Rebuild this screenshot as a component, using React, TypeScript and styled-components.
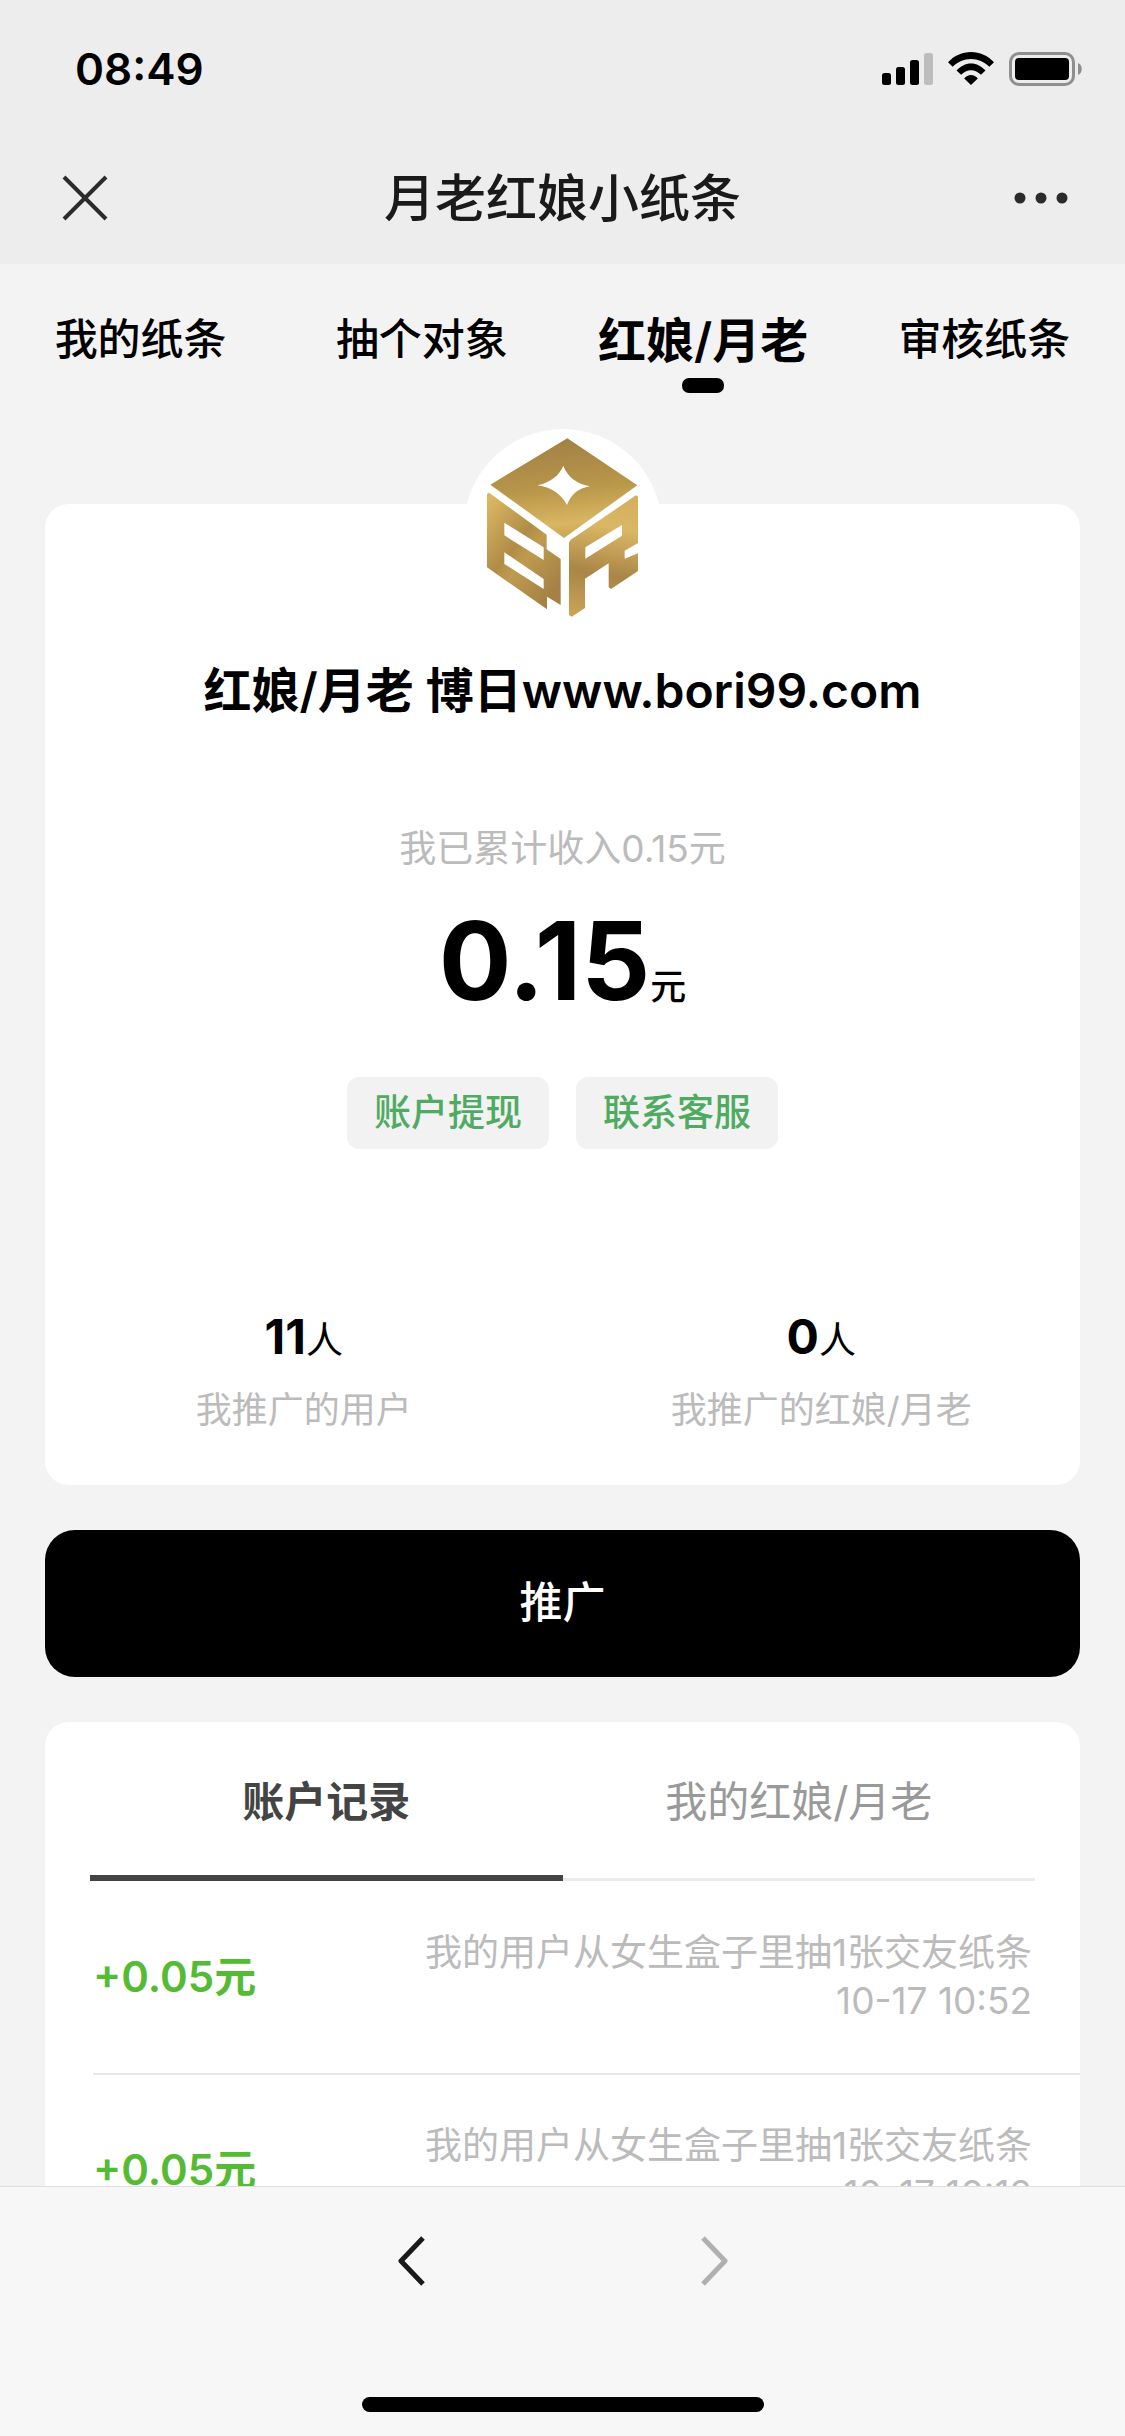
import React from "react";
import styled, { createGlobalStyle } from "styled-components";

const GlobalStyle = createGlobalStyle`
  *, *::before, *::after { box-sizing: border-box; }
  body {
    margin: 0;
    background: #f3f3f3;
    color: #000;
    font-family: Inter, "Noto Sans CJK SC", sans-serif;
  }
  button {
    margin: 0;
    padding: 0;
    border: 0;
    background: none;
    color: inherit;
    font: inherit;
    cursor: pointer;
  }
  svg { display: block; }
  h1, h2, p, ul, dl, dd { margin: 0; padding: 0; }
`;

const Screen = styled.div`
  display: flex;
  flex-direction: column;
  height: 100vh;
`;

const Header = styled.header`
  flex: none;
  background: #ededed;
`;

const StatusBar = styled.div`
  display: flex;
  align-items: center;
  justify-content: space-between;
  height: 132px;
  padding: 6px 42px 0 75px;
`;

const Clock = styled.time`
  font-size: 44px;
  font-weight: 600;
  line-height: 54px;
`;

const StatusIcons = styled.div`
  display: flex;
  align-items: center;
  gap: 15px;
`;

const TitleBar = styled.div`
  display: grid;
  grid-template-columns: 1fr auto 1fr;
  align-items: center;
  height: 132px;
  padding: 0 57px;
`;

const Title = styled.h1`
  padding-top: 2px;
  color: #1a1a1a;
  font-size: 51px;
  font-weight: 500;
  line-height: 66px;
`;

const IconButton = styled.button<{ $end?: boolean }>`
  justify-self: ${(p) => (p.$end ? "end" : "start")};
`;

const Content = styled.main`
  flex: 1;
  min-height: 0;
  overflow-y: auto;
  scrollbar-width: none;
`;

const MainTabs = styled.nav`
  display: grid;
  grid-template-columns: repeat(4, 1fr);
  height: 165px;
`;

const MainTab = styled.button<{ $active?: boolean }>`
  display: flex;
  flex-direction: column;
  align-items: center;
  justify-content: flex-start;
  gap: ${(p) => (p.$active ? 3 : 6)}px;
  padding-top: 42px;
  font-size: ${(p) => (p.$active ? 48 : 43)}px;
  font-weight: ${(p) => (p.$active ? 600 : 500)};
  line-height: ${(p) => (p.$active ? 69 : 66)}px;
  white-space: nowrap;

  &::after {
    content: "";
    width: 42px;
    height: 15px;
    border-radius: 7px;
    background: ${(p) => (p.$active ? "#000" : "transparent")};
  }
`;

const Sections = styled.div`
  display: flex;
  flex-direction: column;
  gap: 45px;
  padding: 0 45px 45px;
`;

const Card = styled.section`
  border-radius: 24px;
  background: #fff;
`;

const ProfileCard = styled(Card)`
  display: flex;
  flex-direction: column;
  align-items: center;
  margin-top: 75px;
  padding-bottom: 48px;
`;

const Avatar = styled.div`
  width: 198px;
  height: 198px;
  margin-top: -75px;
  border-radius: 50%;
  background: #fff;
  overflow: hidden;
`;

const Name = styled.h2`
  margin-top: 28px;
  font-size: 48px;
  font-weight: 600;
  line-height: 72px;
`;

const Earned = styled.p`
  margin-top: 95px;
  color: #bbb;
  font-size: 37px;
  line-height: 54px;
`;

const Balance = styled.p`
  margin-top: 22px;
  font-size: 108px;
  font-weight: 700;
  line-height: 126px;
`;

const BalanceUnit = styled.span`
  font-size: 36px;
  font-weight: 500;
`;

const Actions = styled.div`
  display: flex;
  gap: 27px;
  margin-top: 27px;
`;

const ActionButton = styled.button`
  height: 72px;
  padding: 0 27px;
  border-radius: 12px;
  background: #f2f2f2;
  color: #4fab62;
  font-size: 37px;
  font-weight: 500;
  line-height: 54px;
`;

const Stats = styled.dl`
  display: grid;
  grid-template-columns: 1fr 1fr;
  width: 100%;
  margin-top: 158px;
`;

const Stat = styled.div`
  display: flex;
  flex-direction: column-reverse;
  align-items: center;
  gap: 12px;
`;

const StatLabel = styled.dt`
  color: #bbb;
  font-size: 36px;
  line-height: 54px;
`;

const StatValue = styled.dd`
  font-size: 48px;
  font-weight: 700;
  line-height: 60px;
`;

const StatUnit = styled.span`
  font-size: 37px;
  font-weight: 400;
`;

const PromoteButton = styled.button`
  height: 147px;
  padding-bottom: 10px;
  border-radius: 30px;
  background: #000;
  color: #fff;
  font-size: 43px;
  font-weight: 500;
`;

const RecordTabs = styled.div`
  display: grid;
  grid-template-columns: 1fr 1fr;
  margin: 0 45px;
`;

const RecordTab = styled.button<{ $active?: boolean }>`
  height: 159px;
  padding-bottom: 4px;
  border-bottom: 3px solid ${(p) => (p.$active ? "#444" : "#ebebeb")};
  box-shadow: ${(p) => (p.$active ? "inset 0 -3px #444" : "none")};
  color: ${(p) => (p.$active ? "#444" : "#999")};
  font-size: 42px;
  font-weight: ${(p) => (p.$active ? 600 : 400)};
`;

const Records = styled.ul`
  list-style: none;
  padding-left: 48px;
`;

const Record = styled.li`
  display: flex;
  align-items: center;
  justify-content: space-between;
  height: 192px;
  padding-right: 48px;

  & + & { border-top: 2px solid #e8e8e8; }
`;

const Amount = styled.strong`
  color: #55bb35;
  font-size: 42px;
  font-weight: 600;
  line-height: 54px;
`;

const Detail = styled.p`
  color: #bbb;
  font-size: 37px;
  line-height: 48px;
  text-align: right;
`;

const When = styled.time`
  display: block;
`;

const BottomBar = styled.footer`
  display: flex;
  flex: none;
  flex-direction: column;
  align-items: center;
  justify-content: space-between;
  height: 250px;
  padding: 48px 0 24px;
  border-top: 1px solid #dedede;
  background: #f7f7f7;
`;

const History = styled.nav`
  display: flex;
  gap: 276px;
`;

const HomeIndicator = styled.div`
  width: 402px;
  height: 15px;
  border-radius: 8px;
  background: #000;
`;

const Signal = () => (
  <svg width="51" height="34" viewBox="0 0 51 34" aria-hidden="true">
    <rect x="0" y="21" width="9" height="12" rx="2.5" />
    <rect x="14" y="15" width="9" height="18" rx="2.5" />
    <rect x="28" y="8" width="9" height="25" rx="2.5" />
    <rect x="42" y="1" width="9" height="32" rx="2.5" fill="#bdbdbd" />
  </svg>
);

const Wifi = () => (
  <svg width="46" height="34" viewBox="0 0 46 34" aria-hidden="true">
    <path d="M0 10.2C6.200 3.700 14.200 0 23 0s16.800 3.700 23 10.200l-4.700 4.500C36.400 9.700 30 6.900 23 6.900S9.600 9.700 4.700 14.700z" />
    <path d="M8.500 18.600C12.400 14.200 17.500 11.500 23 11.500s10.600 2.700 14.500 7.100l-4.600 4.200C30.200 19.900 26.800 18.200 23 18.200s-7.200 1.700-9.900 4.600z" />
    <path d="M16.200 26.400C18 24.300 20.300 23 23 23s5 1.300 6.800 3.400L23 33z" />
  </svg>
);

const Battery = () => (
  <svg width="74" height="34" viewBox="0 0 74 34" aria-hidden="true">
    <rect x="1.500" y="1.500" width="63" height="31" rx="8.500" fill="none" stroke="#8f8f8f" strokeWidth="3" />
    <rect x="6" y="6" width="54" height="22" rx="4" />
    <path d="M69 11c5 1.500 5 10.500 0 12z" fill="#8f8f8f" />
  </svg>
);

const Cross = () => (
  <svg width="54" height="54" viewBox="0 0 54 54" fill="none" stroke="#2b2b2b" strokeWidth="4" aria-hidden="true">
    <path d="M7 6l42 42M49 6L7 48" />
  </svg>
);

const Dots = () => (
  <svg width="54" height="54" viewBox="0 0 54 54" fill="#2b2b2b" aria-hidden="true">
    <circle cx="6" cy="27" r="5.500" />
    <circle cx="27" cy="27" r="5.500" />
    <circle cx="48" cy="27" r="5.500" />
  </svg>
);

const Chevron = ({ forward }: { forward?: boolean }) => (
  <svg
    width="27"
    height="52"
    viewBox="0 0 27 52"
    fill="none"
    stroke={forward ? "#b0b0b0" : "#1a1a1a"}
    strokeWidth="5"
    strokeLinejoin="round"
    aria-hidden="true"
  >
    <path d={forward ? "M2 3l22 23L2 49" : "M25 3L3 26l22 23"} />
  </svg>
);

const CubeLogo = () => (
  <svg width="198" height="198" viewBox="71 57 594 594" role="img" aria-label="博日">
    <defs>
      <linearGradient id="top" x1="0.400" y1="0" x2="0.550" y2="1">
        <stop offset="0" stopColor="#a18045" />
        <stop offset="0.500" stopColor="#b8964a" />
        <stop offset="0.850" stopColor="#d9b661" />
        <stop offset="1" stopColor="#c9a454" />
      </linearGradient>
      <linearGradient id="left" x1="0" y1="0.100" x2="0.700" y2="1">
        <stop offset="0" stopColor="#dab662" />
        <stop offset="0.450" stopColor="#b08c48" />
        <stop offset="0.600" stopColor="#bf9b50" />
        <stop offset="1" stopColor="#a58146" />
      </linearGradient>
      <linearGradient id="right" x1="0.500" y1="0" x2="0.400" y2="1">
        <stop offset="0" stopColor="#d4b05e" />
        <stop offset="0.250" stopColor="#dab764" />
        <stop offset="0.650" stopColor="#a98547" />
        <stop offset="1" stopColor="#c8a355" />
      </linearGradient>
    </defs>
    <path
      fill="url(#top)"
      fillRule="evenodd"
      d="M381 85L591 226L371 384L150 224zM369 167C356 198 330 217 291 226C333 232 363 252 380 285C393 252 413 235 449 229C410 221 382 202 369 167z"
    />
    <path
      fill="url(#left)"
      fillRule="evenodd"
      d="M146 248L319 374V418L361 447V585L320 560V598L140 472V252zM192 338V376L310 450V412zM192 427V462L310 537V507z"
    />
    <path
      fill="url(#right)"
      fillRule="evenodd"
      d="M587 256L593 260V399L553 422V446L593 430V483L512 537L505 532V460L434 506V594L394 620L386 615V398C388 392 393 388 398 385zM545 345L435 412V446L545 377z"
    />
  </svg>
);

const mainTabs = ["我的纸条", "抽个对象", "红娘/月老", "审核纸条"];

const records = [
  { amount: "+0.05元", text: "我的用户从女生盒子里抽1张交友纸条", when: "10-17 10:52" },
  { amount: "+0.05元", text: "我的用户从女生盒子里抽1张交友纸条", when: "10-17 10:12" },
];

export default function App() {
  return (
    <Screen>
      <GlobalStyle />
      <Header>
        <StatusBar>
          <Clock>08:49</Clock>
          <StatusIcons>
            <Signal />
            <Wifi />
            <Battery />
          </StatusIcons>
        </StatusBar>
        <TitleBar>
          <IconButton aria-label="关闭"><Cross /></IconButton>
          <Title>月老红娘小纸条</Title>
          <IconButton $end aria-label="更多"><Dots /></IconButton>
        </TitleBar>
      </Header>

      <Content>
        <MainTabs>
          {mainTabs.map((label) => (
            <MainTab key={label} $active={label === "红娘/月老"}>{label}</MainTab>
          ))}
        </MainTabs>

        <Sections>
          <ProfileCard>
            <Avatar><CubeLogo /></Avatar>
            <Name>红娘/月老 博日www.bori99.com</Name>
            <Earned>我已累计收入0.15元</Earned>
            <Balance>0.15<BalanceUnit>元</BalanceUnit></Balance>
            <Actions>
              <ActionButton>账户提现</ActionButton>
              <ActionButton>联系客服</ActionButton>
            </Actions>
            <Stats>
              <Stat>
                <StatLabel>我推广的用户</StatLabel>
                <StatValue>11<StatUnit>人</StatUnit></StatValue>
              </Stat>
              <Stat>
                <StatLabel>我推广的红娘/月老</StatLabel>
                <StatValue>0<StatUnit>人</StatUnit></StatValue>
              </Stat>
            </Stats>
          </ProfileCard>

          <PromoteButton>推广</PromoteButton>

          <Card>
            <RecordTabs>
              <RecordTab $active>账户记录</RecordTab>
              <RecordTab>我的红娘/月老</RecordTab>
            </RecordTabs>
            <Records>
              {records.map((r) => (
                <Record key={r.when}>
                  <Amount>{r.amount}</Amount>
                  <Detail>
                    {r.text}
                    <When>{r.when}</When>
                  </Detail>
                </Record>
              ))}
            </Records>
          </Card>
        </Sections>
      </Content>

      <BottomBar>
        <History>
          <IconButton aria-label="后退"><Chevron /></IconButton>
          <IconButton aria-label="前进"><Chevron forward /></IconButton>
        </History>
        <HomeIndicator />
      </BottomBar>
    </Screen>
  );
}
